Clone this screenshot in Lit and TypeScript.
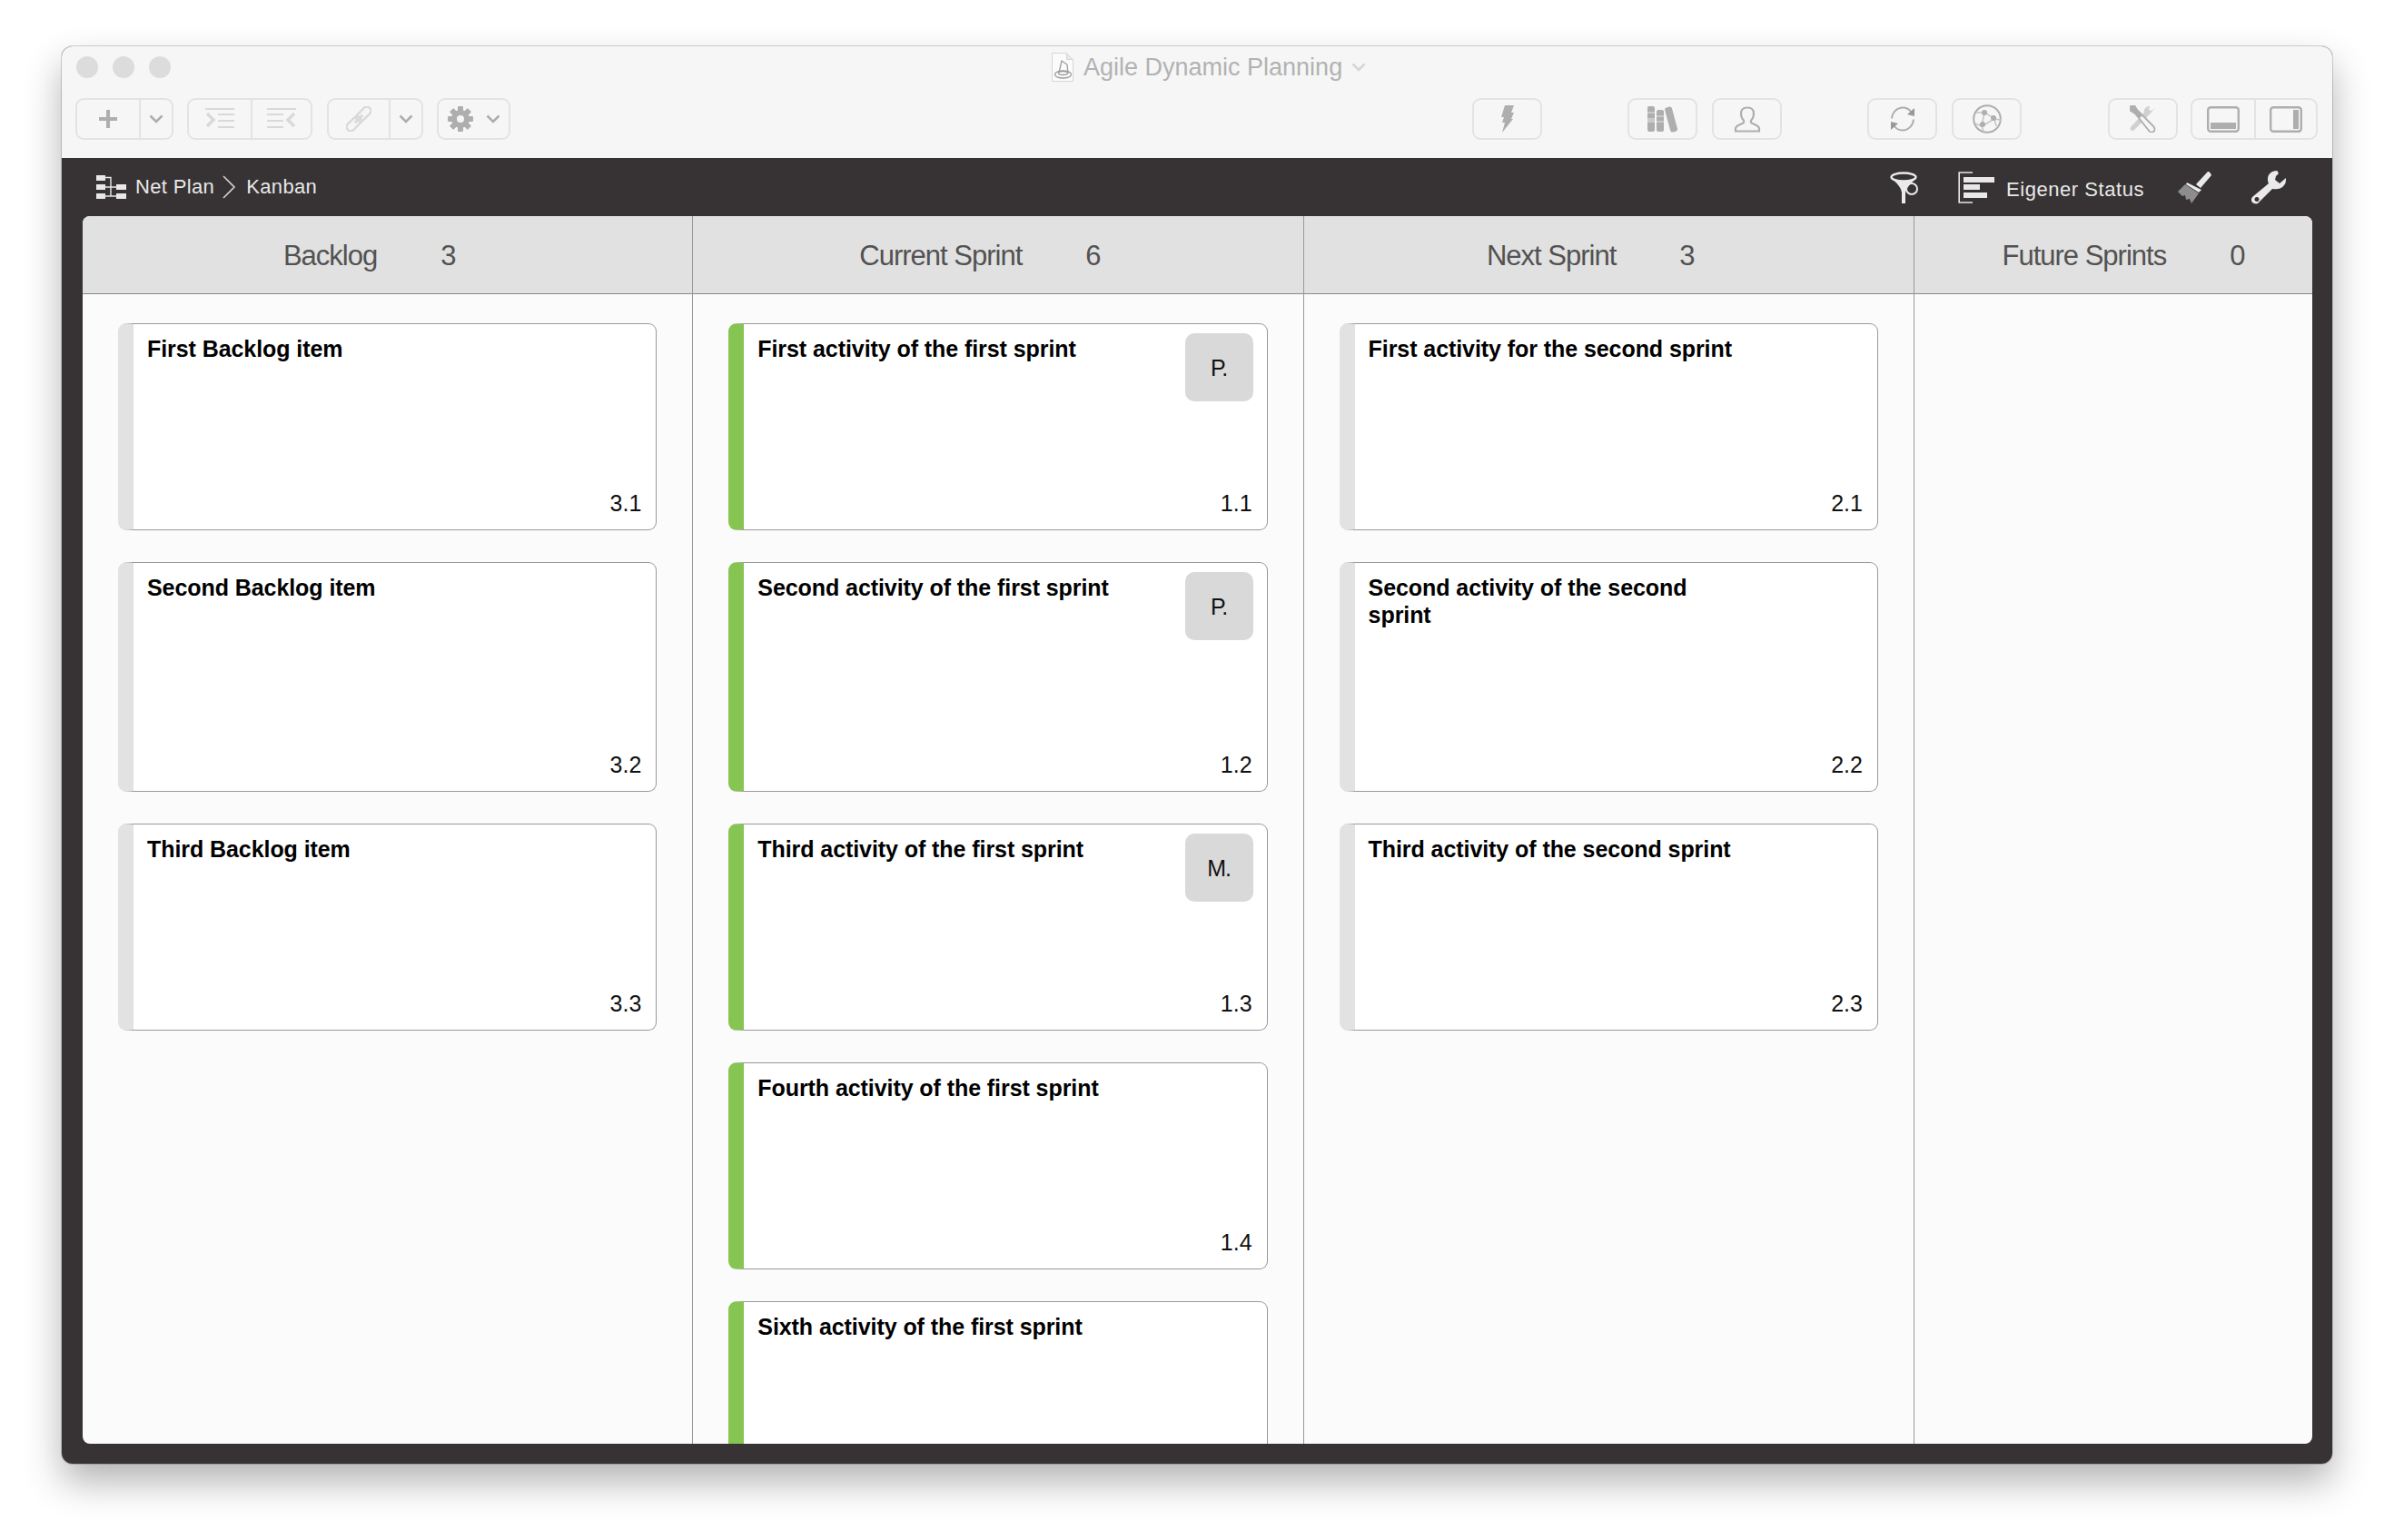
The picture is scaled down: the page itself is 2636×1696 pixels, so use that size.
import { LitElement, html, css } from "lit";
import { customElement } from "lit/decorators.js";

const chev = (c = "#aeaeae") => html`<svg class="ic" width="16" height="10" viewBox="0 0 16 10"><path d="M1.5 1.5 8 8l6.5-6.5" fill="none" stroke="${c}" stroke-width="2.6"/></svg>`;

const icons = {
  plus: html`<svg class="ic" width="20" height="20" viewBox="0 0 20 20"><path d="M8 0h4v8h8v4h-8v8H8v-8H0V8h8z" fill="#aeaeae"/></svg>`,
  indent: html`<svg class="ic" width="33" height="24" viewBox="0 0 33 24"><g fill="#d9d9d9"><rect x="0" y="0" width="32" height="2"/><rect x="14" y="6" width="18" height="2"/><rect x="14" y="13" width="18" height="2"/><rect x="14" y="20" width="18" height="2"/></g><path d="M2 6l7 7-7 7" fill="none" stroke="#d9d9d9" stroke-width="3.4"/></svg>`,
  outdent: html`<svg class="ic" width="33" height="24" viewBox="0 0 33 24"><g fill="#d9d9d9"><rect x="0" y="0" width="32" height="2"/><rect x="0" y="6" width="18" height="2"/><rect x="0" y="13" width="18" height="2"/><rect x="0" y="20" width="18" height="2"/></g><path d="M30 6l-7 7 7 7" fill="none" stroke="#d9d9d9" stroke-width="3.4"/></svg>`,
  link: html`<svg class="ic" width="28" height="28" viewBox="0 0 28 28"><g fill="none" stroke="#d9d9d9" stroke-width="2.4" transform="rotate(45 14 14)"><rect x="9.5" y="-3" width="9" height="19" rx="4.5"/><rect x="9.5" y="12" width="9" height="19" rx="4.5"/><path d="M14 8v12" stroke-width="3"/></g></svg>`,
  gear: html`<svg class="ic" width="28" height="28" viewBox="0 0 28 28"><g fill="#aeaeae"><rect x="11" y="0" width="6" height="28" rx="1"/><rect x="11" y="0" width="6" height="28" rx="1" transform="rotate(45 14 14)"/><rect x="11" y="0" width="6" height="28" rx="1" transform="rotate(90 14 14)"/><rect x="11" y="0" width="6" height="28" rx="1" transform="rotate(135 14 14)"/><circle cx="14" cy="14" r="10"/></g><circle cx="14" cy="14" r="4" fill="#f6f6f6"/></svg>`,
  bolt: html`<svg class="ic" width="14" height="30" viewBox="0 0 14 30"><path d="M4 0h10l-3 8h3l-3 7h2L1 30l3-11H1l2-6H0z" fill="#aeaeae"/></svg>`,
  books: html`<svg class="ic" width="33" height="29" viewBox="0 0 33 29"><g fill="#aeaeae"><rect x="0" y="0" width="8" height="28" rx="2"/><rect x="10" y="4" width="8" height="24" rx="2"/><rect x="24" y="0" width="8" height="28" rx="2.5" transform="rotate(-15 28 14) translate(-2 0)"/></g><g fill="#c9c9c9"><rect x="0" y="6" width="8" height="2"/><rect x="0" y="13" width="8" height="5"/><rect x="10" y="10" width="8" height="2"/><rect x="10" y="16" width="8" height="2"/></g></svg>`,
  person: html`<svg class="ic" width="30" height="29" viewBox="0 0 30 29"><path d="M2 27.5v-3c0-3 4-4 7.5-5.5 2-1 2-2.500 1-4-2-2-2.500-5-2.500-7C8 3.500 11 1.500 15 1.500s7 2 7 6.500c0 2-.5 5-2.500 7-1 1.500-1 3 1 4 3.500 1.500 7.500 2.500 7.500 5.500v3z" fill="none" stroke="#aeaeae" stroke-width="2.200"/></svg>`,
  sync: html`<svg class="ic" width="30" height="30" viewBox="0 0 30 30"><g fill="none" stroke="#aeaeae" stroke-width="2"><path d="M3 14.500C3.500 7.500 9 2.500 15 2.500c4 0 7.500 2 9.500 5"/><path d="M27 15.500c-.5 7-6 12-12 12-4 0-7.500-2-9.500-5"/></g><path d="M28 3v9l-8-2zM2 27v-9l8 2z" fill="#999"/></svg>`,
  net: html`<svg class="ic" width="32" height="32" viewBox="0 0 32 32"><circle cx="16" cy="16" r="14.800" fill="none" stroke="#aeaeae" stroke-width="2"/><g fill="none" stroke="#c4c4c4" stroke-width="1.500"><path d="M4 9l10 0 10 7 7 1M13 9l-3 15M14 9l10 7-14 8 2 6M10 24l-7-3M24 16l2 8"/></g><g fill="#aeaeae"><circle cx="13" cy="9" r="3"/><circle cx="23" cy="15" r="3"/><circle cx="11" cy="22" r="3"/></g></svg>`,
  tools: html`<svg class="ic" width="31" height="30" viewBox="0 0 31 30"><path d="M20 13 29 3l-4 3-3-1 1-4c-3 0-6 2-6 5l-1 3-14 15c-1 2 0 4 2 4 1 0 2-1 3-2l13-13z" fill="#d0d0d0"/><path d="M2 1l4-1 3 5 18 18c2 2 2 3 1 5s-3 2-5 1L7 9 2 6z" fill="#f6f6f6" stroke="#aeaeae" stroke-width="1.800"/><path d="M2 1l4-1 3 5 6 6-3 3-5-5L2 6z" fill="#aeaeae"/></svg>`,
  panelB: html`<svg class="ic" width="36" height="29" viewBox="0 0 36 29"><rect x="1.200" y="1.200" width="33.600" height="26.600" rx="3" fill="none" stroke="#aeaeae" stroke-width="2.400"/><rect x="4" y="18" width="28" height="7" fill="#aeaeae"/></svg>`,
  panelR: html`<svg class="ic" width="36" height="29" viewBox="0 0 36 29"><rect x="1.200" y="1.200" width="33.600" height="26.600" rx="3" fill="none" stroke="#aeaeae" stroke-width="2.400"/><rect x="26" y="4" width="6" height="21" fill="#aeaeae"/></svg>`,
  doc: html`<svg class="ic" width="24" height="32" viewBox="0 0 24 32"><path d="M.5.5h16l7 7v24H.500z" fill="#fbfbfb" stroke="#d6d6d6"/><path d="M16.500.5v7h7" fill="#e6e6e6" stroke="#d6d6d6"/><g fill="none" stroke="#9c9c9c" stroke-width="1.300"><path d="M8 22 11 9l6 4 1 10"/><ellipse cx="12.500" cy="24" rx="9" ry="4"/><ellipse cx="12.500" cy="22.500" rx="5" ry="2"/></g></svg>`,
  tree: html`<svg class="ic" width="33" height="26" viewBox="0 0 33 26"><g fill="#e8e8e8"><rect x="0" y="0" width="10" height="6"/><rect x="0" y="10" width="10" height="6"/><rect x="0" y="20" width="10" height="6"/><rect x="22" y="10" width="11" height="6"/><rect x="22" y="20" width="11" height="6"/></g><path d="M10 2.500h6v21M10 23h12M16 13h6M10 13h6" fill="none" stroke="#e8e8e8" stroke-width="1.400"/></svg>`,
  crumb: html`<svg class="ic crumb" width="15" height="26" viewBox="0 0 15 26"><path d="M1 1l12 12L1 25" fill="none" stroke="#cfcfcf" stroke-width="1.600"/></svg>`,
  funnel: html`<svg class="ic" width="33" height="35" viewBox="0 0 33 35"><ellipse cx="15" cy="6" rx="13.500" ry="4.500" fill="none" stroke="#eaeaea" stroke-width="2.400"/><path d="M2 8c6 5 10 9 11 15v12h4V23c1-5 5-9 11-15-7 3-19 3-26 0z" fill="#eaeaea"/><circle cx="24" cy="19" r="6" fill="none" stroke="#eaeaea" stroke-width="2"/></svg>`,
  status: html`<svg class="ic" width="40" height="35" viewBox="0 0 40 35"><path d="M16 1H1.200v33H16" fill="none" stroke="#e8e8e8" stroke-width="1.600"/><g fill="#e8e8e8"><rect x="6" y="6" width="34" height="6"/><rect x="6" y="14" width="18" height="6"/><rect x="6" y="23" width="26" height="6"/></g></svg>`,
  brush: html`<svg class="ic" width="38" height="37" viewBox="0 0 38 37"><path d="M36 3c-1-2-3-3-4-1L20 15l5 4L37 5z" fill="#eaeaea"/><path d="M10 13l16 8-3 3-14-9z" fill="#eaeaea"/><path d="M8 15 0 23l5 5 3-1 1 5 4-1 2 5 8-11z" fill="#8d8d8d"/></svg>`,
  wrench: html`<svg class="ic" width="38" height="37" viewBox="0 0 38 37"><path fill-rule="evenodd" d="M28 0c-6 0-10 4-10 9 0 2 0 3 1 5L1 29c-2 3-1 6 2 7s4 0 5-1L23 20c6 1 10 0 13-4 2-2 2-5 2-8l-7 6-5-4 1-4 3-3c-2-3-1-3-2-3zM6 29a2.500 2.500 0 1 0 .01 0z" fill="#eaeaea"/></svg>`,
};

type Card = { t: string; n: string; b?: string; h: string };
type Col = { name: string; count: string; green?: boolean; cards: Card[]; cls: string };

const cols: Col[] = [
  { name: "Backlog", count: "3", cls: "", cards: [
    { t: "First Backlog item", n: "3.1", h: "short" },
    { t: "Second Backlog item", n: "3.2", h: "tall" },
    { t: "Third Backlog item", n: "3.3", h: "short" },
  ]},
  { name: "Current Sprint", count: "6", green: true, cls: "", cards: [
    { t: "First activity of the first sprint", n: "1.1", b: "P.", h: "short" },
    { t: "Second activity of the first sprint", n: "1.2", b: "P.", h: "tall" },
    { t: "Third activity of the first sprint", n: "1.3", b: "M.", h: "short" },
    { t: "Fourth activity of the first sprint", n: "1.4", h: "short" },
    { t: "Sixth activity of the first sprint", n: "", h: "short" },
  ]},
  { name: "Next Sprint", count: "3", cls: "", cards: [
    { t: "First activity for the second sprint", n: "2.1", h: "short" },
    { t: "Second activity of the second sprint", n: "2.2", h: "tall" },
    { t: "Third activity of the second sprint", n: "2.3", h: "short" },
  ]},
  { name: "Future Sprints", count: "0", cls: "last", cards: [] },
];

@customElement("app-root")
export class AppRoot extends LitElement {
  static styles = css`
    :host { display: block; width: 2636px; height: 1696px; box-sizing: border-box; padding: 51px 68px 0; background: #fff; font-family: "Liberation Sans", Arial, sans-serif; overflow: hidden; }
    .window { width: 2500px; height: 1561px; border-radius: 12px; background: #373334; box-shadow: 0 0 0 1px rgba(0,0,0,.16), 0 20px 42px rgba(0,0,0,.3); display: flex; flex-direction: column; overflow: hidden; }
    .chrome { background: #f6f6f6; height: 123px; flex: none; }
    .titlerow { height: 57px; display: flex; align-items: flex-start; padding: 11px 0 0 16px; box-sizing: border-box; }
    .lights { display: flex; gap: 16px; }
    .light { width: 24px; height: 24px; border-radius: 50%; background: #dcdcdc; }
    .title { margin: -4px 0 0 970px; display: flex; align-items: center; gap: 11px; color: #b2b2b2; font-size: 27px; line-height: 32px; }
    .title .ic:last-child { margin-left: -1px; }
    .toolbar { display: flex; padding: 0 16px 0 15px; height: 46px; }
    .btn { display: flex; height: 46px; box-sizing: border-box; border: 2px solid #e3e3e3; border-radius: 9px; margin-left: 15px; }
    .btn:first-child { margin-left: 0; }
    .seg { display: flex; align-items: center; justify-content: center; height: 100%; gap: 14px; flex: none; box-sizing: border-box; }
    .seg + .seg { border-left: 2px solid #e3e3e3; }
    .w36 { width: 36px; } .w66 { width: 66px; } .w68 { width: 68px; } .w77 { width: 77px; } .w73 { width: 73px; }
    .m16 { margin-left: 16px; }
    .m14 { margin-left: 14px; }
    .push { margin-left: auto; }
    .far { margin-left: 94px; }
    .far95 { margin-left: 95px; }
    .ic { display: block; flex: none; }
    .bar { height: 64px; flex: none; background: #373334; display: flex; align-items: center; padding: 0 51px 0 38px; color: #e8e8e8; font-size: 22px; letter-spacing: .35px; }
    .crumb { margin: 0 11px 0 9px; }
    .net { margin-left: 10px; }
    .lead { display: flex; align-items: center; margin-top: -1px; }
    .bar .right { margin-left: auto; display: flex; align-items: center; }
    .status { margin: 0 37px 0 42px; display: flex; align-items: center; gap: 13px; letter-spacing: .55px; }
    .status span { padding-top: 5px; }
    .wrench { margin-left: 43px; }
    .board { flex: 1; margin: 0 22px 22px 23px; background: #fbfbfb; border-radius: 8px; display: flex; overflow: hidden; }
    .col { width: 672.3px; flex: none; box-sizing: border-box; border-right: 1px solid #999; }
    .col.last { flex: 1; border-right: 0; }
    .head { height: 86px; box-sizing: border-box; background: #e1e1e1; border-bottom: 1px solid #888; display: flex; justify-content: center; align-items: center; gap: 70px; padding: 2px 40px 0 0; color: #525252; font-size: 31px; letter-spacing: -1px; }
    .last .head { padding: 2px 0 0 22px; }
    .cards { padding: 32px 39px 0 39px; display: flex; flex-direction: column; gap: 35px; }
    .card { position: relative; flex: none; box-sizing: border-box; border: 1px solid #999; border-radius: 9px; background: #fff; border-left-width: 17px; border-left-color: #e2e2e2; padding: 12px 16px 14px 15px; display: flex; flex-direction: column; justify-content: space-between; color: #000; font-size: 25px; line-height: 30px; }
    .card.green { border-left-color: #86c552; }
    .short { height: 228px; }
    .tall { height: 253px; }
    .t { font-weight: 700; max-width: 412px; letter-spacing: -.07px; }
    .n { text-align: right; color: #111; }
    .badge { position: absolute; top: 10px; right: 15px; width: 75px; height: 75px; border-radius: 10px; background: #d9d9d9; display: flex; align-items: center; justify-content: center; color: #111; letter-spacing: -1px; }
  `;

  render() {
    return html`<div class="window">
      <div class="chrome">
        <div class="titlerow">
          <div class="lights"><div class="light"></div><div class="light"></div><div class="light"></div></div>
          <div class="title">${icons.doc}<span>Agile Dynamic Planning</span>${chev("#d6d6d6")}</div>
        </div>
        <div class="toolbar">
          <div class="btn"><div class="seg w68">${icons.plus}</div><div class="seg w36">${chev()}</div></div>
          <div class="btn"><div class="seg w68">${icons.indent}</div><div class="seg w66">${icons.outdent}</div></div>
          <div class="btn m16"><div class="seg w66">${icons.link}</div><div class="seg w36">${chev()}</div></div>
          <div class="btn"><div class="seg w77">${icons.gear}${chev()}</div></div>
          <div class="btn push"><div class="seg w73">${icons.bolt}</div></div>
          <div class="btn far"><div class="seg w73">${icons.books}</div></div>
          <div class="btn m16"><div class="seg w73">${icons.person}</div></div>
          <div class="btn far"><div class="seg w73">${icons.sync}</div></div>
          <div class="btn m16"><div class="seg w73">${icons.net}</div></div>
          <div class="btn far95"><div class="seg w73">${icons.tools}</div></div>
          <div class="btn m14"><div class="seg w68">${icons.panelB}</div><div class="seg w68">${icons.panelR}</div></div>
        </div>
      </div>
      <div class="bar">
        <div class="lead">${icons.tree}<span class="net">Net Plan</span>${icons.crumb}<span>Kanban</span></div>
        <div class="right">
          ${icons.funnel}
          <div class="status">${icons.status}<span>Eigener Status</span></div>
          ${icons.brush}
          <div class="wrench">${icons.wrench}</div>
        </div>
      </div>
      <div class="board">
        ${cols.map(c => html`<div class="col ${c.cls}">
          <div class="head"><span>${c.name}</span><span>${c.count}</span></div>
          <div class="cards">
            ${c.cards.map(k => html`<div class="card ${k.h} ${c.green ? "green" : ""}">
              <div class="t">${k.t}</div>
              ${k.b ? html`<div class="badge">${k.b}</div>` : ""}
              <div class="n">${k.n}</div>
            </div>`)}
          </div>
        </div>`)}
      </div>
    </div>`;
  }
}
